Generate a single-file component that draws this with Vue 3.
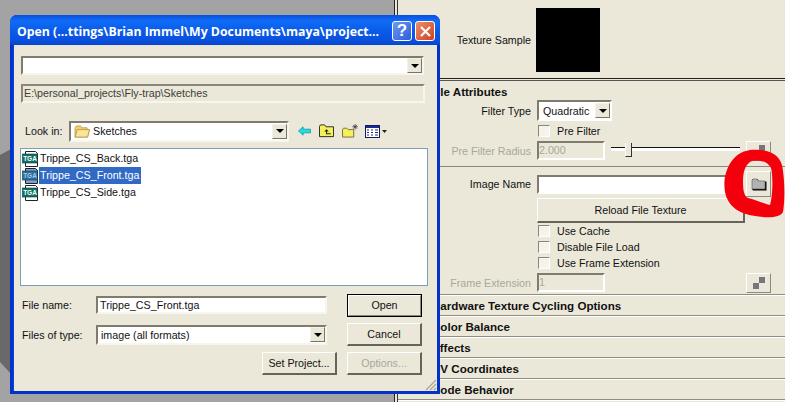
<script setup>
const files = [
  { name: 'Trippe_CS_Back.tga', selected: false },
  { name: 'Trippe_CS_Front.tga', selected: true },
  { name: 'Trippe_CS_Side.tga', selected: false }
]
const sections = [
  'Hardware Texture Cycling Options',
  'Color Balance',
  'Effects',
  'UV Coordinates',
  'Node Behavior'
]
const options = ['Use Cache', 'Disable File Load', 'Use Frame Extension']
</script>

<template>
  <div class="screen">
    <div class="viewport">
      <svg class="wedge" width="12" height="402" viewBox="0 0 12 402">
        <polygon points="0,155 11,149 11,374 0,362" fill="#696969" />
      </svg>
    </div>

    <div class="panel">
      <div class="row sample-row">
        <div class="label">Texture Sample</div>
        <div class="swatch"></div>
      </div>
      <div class="double-line"></div>
      <div class="section-title first">File Attributes</div>

      <div class="row filter-row">
        <div class="label">Filter Type</div>
        <div class="select">
          <span class="select-text">Quadratic</span>
          <span class="arrow-btn"><i></i></span>
        </div>
      </div>
      <div class="row check-row prefilter">
        <div class="label"></div>
        <span class="check"></span>
        <span>Pre Filter</span>
      </div>
      <div class="row radius-row">
        <div class="label disabled">Pre Filter Radius</div>
        <div class="field num disabled">2.000</div>
        <div class="slider"><span class="thumb"></span></div>
        <div class="map-btn">
          <svg width="12" height="12" viewBox="0 0 12 12">
            <rect x="6" y="0" width="6" height="6" fill="#77757a" />
            <rect x="0" y="6" width="6" height="6" fill="#c9b9b4" />
          </svg>
        </div>
      </div>
      <div class="thin-line"></div>

      <div class="row image-row">
        <div class="label">Image Name</div>
        <div class="field image-field"></div>
        <div class="folder-btn">
          <svg width="16" height="13" viewBox="0 0 16 13">
            <path d="M2 12.5H15.5V3.5H8L6.5 1H2L1 2V11Z" fill="#000" />
            <path d="M1 2L2 1H6L7.5 3H14V11H1Z" fill="#b2b2b2" stroke="#55554f" stroke-width="0.6" />
          </svg>
        </div>
      </div>
      <div class="row reload-row">
        <div class="label"></div>
        <div class="btn reload">Reload File Texture</div>
      </div>
      <div v-for="opt in options" :key="opt" class="row check-row">
        <div class="label"></div>
        <span class="check"></span>
        <span>{{ opt }}</span>
      </div>
      <div class="row frame-row">
        <div class="label disabled">Frame Extension</div>
        <div class="field num disabled">1</div>
        <div class="map-btn frame-map">
          <svg width="12" height="12" viewBox="0 0 12 12">
            <rect x="6" y="0" width="6" height="6" fill="#77757a" />
            <rect x="0" y="6" width="6" height="6" fill="#77757a" />
          </svg>
        </div>
      </div>

      <div class="sections">
        <div v-for="s in sections" :key="s" class="section-row">{{ s }}</div>
      </div>
    </div>

    <div class="dialog">
      <div class="titlebar">
        <span class="title">Open (...ttings\Brian Immel\My Documents\maya\project...</span>
        <span class="cap help">?</span>
        <span class="cap close">
          <svg width="13" height="13" viewBox="0 0 13 13">
            <path d="M2 2L11 11M11 2L2 11" stroke="#fff" stroke-width="2.2" />
          </svg>
        </span>
      </div>
      <div class="client">
        <div class="combo top-combo"><span class="arrow-btn"><i></i></span></div>
        <div class="path-field">E:\personal_projects\Fly-trap\Sketches</div>

        <div class="lookin">
          <span class="lookin-label">Look in:</span>
          <div class="combo lookin-combo">
            <svg class="mini-folder" width="16" height="13" viewBox="0 0 17 14">
              <path d="M1 3L2.5 1H7L8.5 3H14V5H16.5L14.5 13H1Z" fill="#f2cf6a" stroke="#b08f3c" stroke-width="0.8" />
              <path d="M1 13L3.5 5H16.5L14.5 13Z" fill="#fbe49a" stroke="#b08f3c" stroke-width="0.8" />
            </svg>
            <span class="combo-text">Sketches</span>
            <span class="arrow-btn"><i></i></span>
          </div>
          <div class="tools">
            <svg width="13" height="10" viewBox="0 0 14 10">
              <path d="M0.5 5L5.5 0.5V3H13.5V7H5.5V9.5Z" fill="#17e0e6" stroke="#0a7f96" stroke-width="0.7" />
            </svg>
            <svg width="15" height="14" viewBox="0 0 16 14">
              <path d="M0.5 13V2L1.5 0.5H6L7.5 2.5H15.5V13Z" fill="#f6f05c" stroke="#222" />
              <path d="M8 5L5.5 7.5H7.5V10.5H12.5V9.5H8.5V7.5H10.5Z" fill="#222" />
            </svg>
            <svg width="16" height="14" viewBox="0 0 17 15">
              <path d="M0.5 14V6L1.5 4.5H5L6.5 6H12.5V14Z" fill="#f6f05c" stroke="#6f6a3a" />
              <path d="M14 0V6M11 3H17M12 1L16 5M16 1L12 5" stroke="#333" stroke-width="0.8" />
            </svg>
            <svg class="views" width="23" height="13" viewBox="0 0 23 13">
              <rect x="0.5" y="0.5" width="14" height="12" fill="#fff" stroke="#111a66" />
              <rect x="1" y="1" width="13" height="2" fill="#1b2a8c" />
              <path d="M2 5H4M6 5H8M10 5H13M2 7.5H4M6 7.5H8M10 7.5H13M2 10H4M6 10H8M10 10H13" stroke="#1b2a8c" />
              <path d="M17 5H22L19.5 8Z" fill="#222" />
            </svg>
          </div>
        </div>

        <div class="file-list">
          <div v-for="f in files" :key="f.name" class="file-item">
            <svg class="tga" width="17" height="16" viewBox="0 0 17 16">
              <path d="M3.5 0.5H13.5L15.5 2.5V15.5H3.5Z" :fill="f.selected ? '#7f9ede' : '#fff'" stroke="#222" />
              <rect x="0.5" y="3" width="15" height="9" :fill="f.selected ? '#2f6f9e' : '#0d7264'" stroke="#063d36" stroke-width="0.6" />
              <text x="8" y="10" class="tga-text" :class="{ 'tga-sel': f.selected }">TGA</text>
            </svg>
            <span class="file-name" :class="{ selected: f.selected }">{{ f.name }}</span>
          </div>
        </div>

        <div class="form-row first-form">
          <span class="form-label">File name:</span>
          <div class="field name-field">Trippe_CS_Front.tga</div>
          <div class="btn dlg-btn default-btn">Open</div>
        </div>
        <div class="form-row second-form">
          <span class="form-label">Files of type:</span>
          <div class="combo type-combo">
            <span class="combo-text">image (all formats)</span>
            <span class="arrow-btn"><i></i></span>
          </div>
          <div class="btn dlg-btn">Cancel</div>
        </div>
        <div class="form-row third-form">
          <div class="btn dlg-btn">Set Project...</div>
          <div class="btn dlg-btn off">Options...</div>
        </div>
        <svg class="grip" width="13" height="13" viewBox="0 0 13 13">
          <path d="M12 2L2 12M12 6L6 12M12 10L10 12" stroke="#a9a79b" stroke-width="1.2" />
        </svg>
      </div>
    </div>

    <svg class="ring" width="785" height="402" viewBox="0 0 785 402">
      <path fill-rule="evenodd" fill="#f4000c"
        d="M750 150C765 149 778 152 782 165C785 180 785 200 783 212C780 218 768 218 755 216C740 214 728 207 725 192C722 175 730 153 750 150Z
           M752 161C745 164 743 172 743 182C743 190 744 196 748 198C756 200 765 204 770 205C773 195 773 175 771 168C767 161 760 160 752 161Z" />
    </svg>
  </div>
</template>

<style>
html, body { margin: 0; background: #ebe8da; }
</style>

<style scoped>
.screen {
  position: relative;
  width: 785px;
  height: 402px;
  display: flex;
  overflow: hidden;
  font-family: "Liberation Sans", Arial, sans-serif;
  font-size: 10.7px;
  color: #111;
  background: #ebe8da;
}

.viewport {
  width: 394px;
  flex: none;
  background: #a3a3a3;
  border-right: 1px solid #222;
}
.wedge { display: block; }

.panel {
  flex: 1;
  min-width: 0;
  margin-left: 2px;
  border-left: 1px solid #333;
  display: flex;
  flex-direction: column;
}

.row { display: flex; align-items: center; }
.label {
  width: 133px;
  flex: none;
  margin-right: 6px;
  text-align: right;
  white-space: nowrap;
}
.disabled { color: #a9a79a; }

.sample-row { margin-top: 8px; height: 64px; }
.swatch { width: 64px; height: 64px; margin-left: -1px; background: #000; }
.double-line {
  margin-top: 6px;
  height: 1px;
  border-top: 1px solid #222;
  border-bottom: 1px solid #555;
}
.section-title {
  padding-left: 32px;
  font-size: 11.6px;
  font-weight: bold;
  white-space: nowrap;
}
.first { margin-top: 3px; height: 16px; line-height: 16px; }

.filter-row { height: 21px; }
.select {
  width: 75px;
  height: 21px;
  box-sizing: border-box;
  display: flex;
  align-items: center;
  background: #fff;
  border: 2px solid;
  border-color: #7f7c6d #fff #fff #7f7c6d;
}
.select-text { flex: 1; padding-left: 4px; }

.arrow-btn {
  width: 15px;
  height: 15px;
  flex: none;
  display: flex;
  align-items: center;
  justify-content: center;
  box-sizing: border-box;
  background: #ebe8da;
  border: 1px solid;
  border-color: #f4f2e8 #77756a #77756a #f4f2e8;
}
.arrow-btn i {
  width: 0;
  height: 0;
  border-left: 4px solid transparent;
  border-right: 4px solid transparent;
  border-top: 4px solid #000;
}

.check-row { height: 16px; }
.prefilter { margin-top: 2px; }
.check {
  width: 12px;
  height: 12px;
  flex: none;
  margin: 0 7px 0 1px;
  background: #f6f4ea;
  border: 1px solid;
  border-color: #8a8778 #fff #fff #8a8778;
  box-sizing: border-box;
}

.field {
  box-sizing: border-box;
  background: #fff;
  border: 2px solid;
  border-color: #7f7c6d #fff #fff #7f7c6d;
  white-space: nowrap;
}
.field.num {
  width: 68px;
  height: 19px;
  line-height: 15px;
  background: #ebe8da;
}

.radius-row { margin-top: 1px; height: 21px; }
.slider {
  position: relative;
  width: 129px;
  height: 3px;
  margin: -4px 6px 0 6px;
  background: #fff;
  border-top: 1px solid #111;
}
.thumb {
  position: absolute;
  left: 14px;
  top: -5px;
  width: 5px;
  height: 13px;
  background: #ebe8da;
  border-right: 1px solid #333;
  border-bottom: 1px solid #333;
  border-left: 1px solid #fff;
}
.map-btn {
  width: 25px;
  height: 20px;
  box-sizing: border-box;
  display: flex;
  align-items: center;
  justify-content: center;
  border: 1px solid;
  border-color: #fff #8c8a7e #8c8a7e #fff;
}
.frame-map { margin-left: 141px; }

.thin-line { margin-top: 5px; height: 1px; background: #8a887c; }

.image-row { margin-top: 4px; height: 26px; }
.image-field { width: 206px; height: 19px; margin-right: 3px; }
.folder-btn {
  width: 25px;
  height: 26px;
  box-sizing: border-box;
  display: flex;
  align-items: center;
  justify-content: center;
  border: 1px solid;
  border-color: #fff #8c8a7e #8c8a7e #fff;
}

.reload-row { height: 26px; }
.btn {
  box-sizing: border-box;
  display: flex;
  align-items: center;
  justify-content: center;
  white-space: nowrap;
  background: #ebe8da;
  border: 1px solid;
  border-color: #fff #66645a #66645a #fff;
}
.reload { width: 208px; height: 25px; border-bottom-width: 2px; border-right-width: 2px; }

.frame-row { height: 21px; margin-top: 1px; }

.sections {
  margin-top: 1px;
  border-top: 1px solid #8f8d82;
  box-shadow: inset 0 1px 0 #fff;
}
.section-row {
  height: 21px;
  line-height: 21px;
  box-sizing: border-box;
  padding-left: 34px;
  font-size: 11.6px;
  font-weight: bold;
  white-space: nowrap;
  border-bottom: 1px solid #8f8d82;
  box-shadow: 0 1px 0 #fff;
}

/* the file dialog sits on top of the panel */
.dialog {
  position: absolute;
  left: 10px;
  top: 15px;
  width: 430px;
  height: 379px;
  box-sizing: border-box;
  display: flex;
  flex-direction: column;
  background: #0a45d8;
  border-radius: 7px 7px 0 0;
  border: 3px solid #0632cc;
  border-top: 0;
}
.titlebar {
  height: 30px;
  flex: none;
  display: flex;
  align-items: center;
  margin: 0 -3px;
  padding: 0 5px 0 7px;
  border-radius: 7px 7px 0 0;
  background: linear-gradient(#0a4fe0, #0f6cf6 20%, #0a5ae8 55%, #0a50dd 85%, #0545d0);
}
.title {
  flex: 1;
  margin-top: 2px;
  color: #fff;
  font-family: "Open Sans", sans-serif;
  font-weight: bold;
  font-size: 12.3px;
  white-space: nowrap;
  overflow: hidden;
}
.cap {
  width: 20px;
  height: 20px;
  box-sizing: border-box;
  margin: 2px 0 0 3px;
  display: flex;
  align-items: center;
  justify-content: center;
  border: 1px solid #fff;
  border-radius: 3px;
  color: #fff;
  font-weight: bold;
  font-size: 17px;
}
.help { background: linear-gradient(135deg, #6f97ee, #2a5fdc); }
.close { background: linear-gradient(135deg, #ec8d6d, #d2401a); }

.client {
  position: relative;
  flex: 1;
  margin-left: 1px;
  padding: 11px 0 0 7px;
  background: #ebe8da;
}

.combo {
  box-sizing: border-box;
  display: flex;
  align-items: center;
  justify-content: flex-end;
  background: #fff;
  border: 2px solid;
  border-color: #7f7c6d #f7f6ee #f7f6ee #7f7c6d;
}
.top-combo { width: 403px; height: 19px; }
.combo-text { flex: 1; padding-left: 3px; white-space: nowrap; }

.path-field {
  box-sizing: border-box;
  width: 404px;
  height: 19px;
  margin-top: 9px;
  padding-left: 1px;
  line-height: 15px;
  color: #3e3d36;
  border: 2px solid;
  border-color: #8a8778 #f7f6ee #f7f6ee #8a8778;
}

.lookin {
  margin-top: 18px;
  height: 20px;
  display: flex;
  align-items: center;
}
.lookin-label { width: 48px; padding-left: 4px; flex: none; box-sizing: border-box; }
.lookin-combo { width: 220px; height: 21px; }
.mini-folder { margin-left: 3px; flex: none; }
.lookin-combo .combo-text { padding-left: 3px; }

.tools {
  display: flex;
  align-items: center;
  gap: 8px;
  margin-left: 9px;
}
.views { margin-left: -1px; }

.file-list {
  box-sizing: border-box;
  width: 408px;
  height: 138px;
  margin: 7px 0 0 -1px;
  padding: 1px 0 0 1px;
  background: #fff;
  border: 1px solid #7f9db9;
}
.file-item { height: 17px; display: flex; align-items: center; }
.tga { flex: none; }
.tga-text {
  font-family: "Liberation Sans", sans-serif;
  font-size: 6.5px;
  font-weight: bold;
  fill: #fff;
  text-anchor: middle;
}
.tga-sel { fill: #a8c4ea; }
.file-name { padding: 1px 2px 1px 1px; line-height: 15px; white-space: nowrap; }
.file-name.selected { background: #316ac5; color: #fff; }

.form-row { display: flex; align-items: center; }
.first-form { margin-top: 8px; height: 22px; }
.second-form { margin-top: 7px; height: 23px; }
.third-form { margin-top: 6px; height: 23px; width: 401px; justify-content: flex-end; gap: 10px; }
.form-label { width: 75px; flex: none; padding-left: 1px; box-sizing: border-box; }
.name-field { width: 231px; height: 18px; line-height: 14px; padding-left: 2px; border-color: #7f7c6d #f7f6ee #f7f6ee #7f7c6d; }
.type-combo { width: 231px; height: 20px; }
.dlg-btn { width: 75px; height: 23px; margin-left: 20px; border-bottom-width: 2px; border-right-width: 2px; }
.third-form .dlg-btn { margin-left: 0; }
.default-btn { outline: 1px solid #000; outline-offset: -1px; border: 2px solid; border-color: #fff #8b897d #8b897d #fff; }
.off { color: #a9a79a; }
.grip { position: absolute; right: 0; bottom: 0; }

.ring {
  position: absolute;
  left: 0;
  top: 0;
  pointer-events: none;
  filter: blur(0.5px);
}
</style>
